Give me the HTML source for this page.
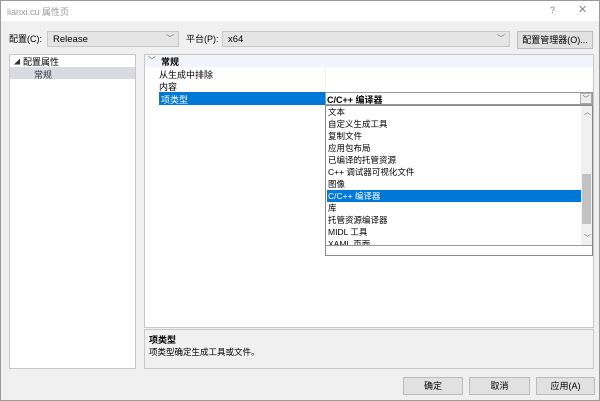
<!DOCTYPE html><html><head><meta charset="utf-8"><style>
*{box-sizing:border-box;margin:0;padding:0}
body{width:600px;height:401px;overflow:hidden;background:#f0f0f0;font-family:"Liberation Sans","Noto Sans CJK SC",sans-serif;font-size:9px;color:#000;position:relative;border:1px solid #999}
.a{position:absolute;white-space:nowrap}
.combo{position:absolute;background:#e5e5e5;border:1px solid #c8c8c8;height:16px;padding:2px 5px;font-size:9.5px}
.arr{position:absolute;right:4px;top:1px;color:#666;font-size:8px}
.btn{position:absolute;background:#e1e1e1;border:1px solid #bcbcbc;height:18px;text-align:center;line-height:16px;font-size:9px}
.it{position:absolute;left:1px;height:12px;line-height:12px;padding-left:1px;font-size:8.5px;width:255px}
</style></head><body>
<div class="a" style="left:0;top:0;width:598px;height:20px;background:#fff"></div>
<div class="a" style="left:6px;top:4px;color:#999;font-size:9px">lianxi.cu 属性页</div>
<div class="a" style="left:549px;top:4px;color:#888;font-size:9px">?</div>
<div class="a" style="left:577px;top:2px;color:#888;font-size:11px">✕</div>
<div class="a" style="left:8px;top:31px;font-size:9px">配置(C):</div>
<div class="combo" style="left:46px;top:30px;width:132px">Release<span class="arr">﹀</span></div>
<div class="a" style="left:185px;top:31px;font-size:9px">平台(P):</div>
<div class="combo" style="left:221px;top:30px;width:288px">x64<span class="arr">﹀</span></div>
<div class="btn" style="left:516px;top:30px;width:76px;height:18px">配置管理器(O)...</div>
<div class="a" style="left:8px;top:53px;width:127px;height:315px;background:#fff;border:1px solid #c8c8c8"></div>
<div class="a" style="left:13px;top:56px;font-size:6px;color:#333">◢</div>
<div class="a" style="left:22px;top:54px;font-size:9px">配置属性</div>
<div class="a" style="left:9px;top:66px;width:125px;height:12px;background:#dadae3"></div>
<div class="a" style="left:33px;top:67px;font-size:9px;color:#333">常规</div>
<div class="a" style="left:143px;top:53px;width:450px;height:274px;background:#fff;border:1px solid #c8c8c8"></div>
<div class="a" style="left:144px;top:54px;width:448px;height:12px;background:#f1f4fa"></div>
<div class="a" style="left:147px;top:54px;font-size:8px;color:#555">﹀</div>
<div class="a" style="left:160px;top:54px;font-weight:bold;font-size:9px">常规</div>
<div class="a" style="left:324px;top:66px;width:1px;height:25px;background:#eee"></div>
<div class="a" style="left:158px;top:67px;font-size:9px">从生成中排除</div>
<div class="a" style="left:158px;top:79px;font-size:9px">内容</div>
<div class="a" style="left:158px;top:91px;width:166px;height:13px;background:#0078d7"></div>
<div class="a" style="left:160px;top:92px;font-size:9px;color:#fff">项类型</div>
<div class="a" style="left:324px;top:91px;width:268px;height:13px;background:#fff;border:1px solid #999"></div>
<div class="a" style="left:326px;top:92px;font-weight:bold;font-size:9px">C/C++ 编译器</div>
<div class="a" style="left:579px;top:92px;width:12px;height:11px;border:1px solid #aaa;background:#eee;font-size:7px;text-align:center;color:#555">﹀</div>
<div class="a" style="left:324px;top:104px;width:268px;height:151px;background:#fff;border:1px solid #888;overflow:hidden">
<div class="it" style="top:0">文本</div>
<div class="it" style="top:12px">自定义生成工具</div>
<div class="it" style="top:24px">复制文件</div>
<div class="it" style="top:36px">应用包布局</div>
<div class="it" style="top:48px">已编译的托管资源</div>
<div class="it" style="top:60px">C++ 调试器可视化文件</div>
<div class="it" style="top:72px">图像</div>
<div class="it" style="top:84px;background:#0078d7;color:#fff">C/C++ 编译器</div>
<div class="it" style="top:96px">库</div>
<div class="it" style="top:108px">托管资源编译器</div>
<div class="it" style="top:120px">MIDL 工具</div>
<div class="it" style="top:132px">XAML 页面</div>
<div class="a" style="left:255px;top:0;width:11px;height:139px;background:#f0f0f0"></div>
<div class="a" style="left:258px;top:1px;font-size:7px;color:#555">︿</div>
<div class="a" style="left:256px;top:68px;width:9px;height:50px;background:#c2c2c2"></div>
<div class="a" style="left:258px;top:127px;font-size:7px;color:#555">﹀</div>
<div class="a" style="left:0;top:139px;width:266px;height:11px;background:#fff;border-top:1px solid #999"></div>
</div>
<div class="a" style="left:143px;top:328px;width:450px;height:40px;background:#f0f0f0;border:1px solid #c8c8c8"></div>
<div class="a" style="left:148px;top:332px;font-weight:bold;font-size:9px">项类型</div>
<div class="a" style="left:148px;top:345px;font-size:8.5px">项类型确定生成工具或文件。</div>
<div class="btn" style="left:402px;top:376px;width:60px">确定</div>
<div class="btn" style="left:468px;top:376px;width:61px">取消</div>
<div class="btn" style="left:535px;top:376px;width:59px">应用(A)</div>
</body></html>
